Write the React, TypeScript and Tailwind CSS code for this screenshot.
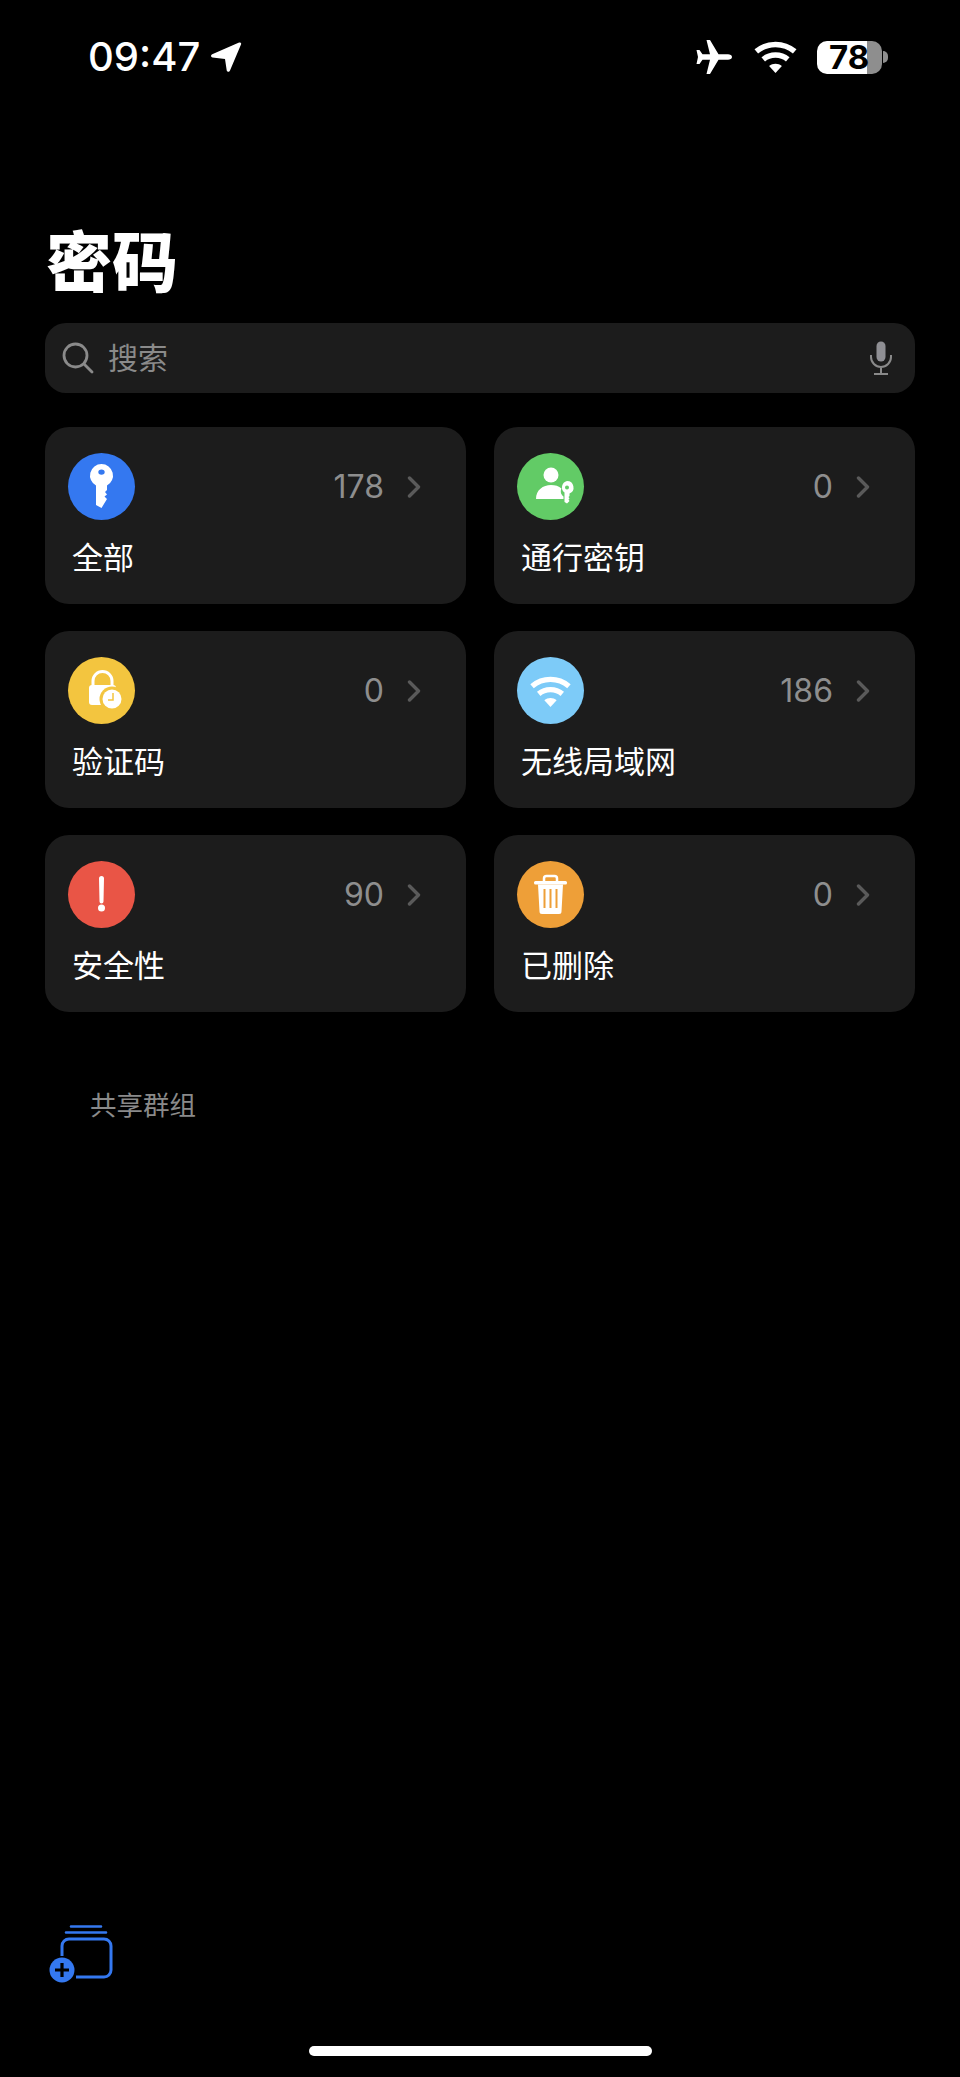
const font = 'font-["Inter","Noto_Sans_CJK_SC",sans-serif]'

function KeyIcon() {
  return (
    <svg viewBox="0 0 67 67" className="w-full h-full">
      <path
        fill="#fff"
        fillRule="evenodd"
        d="M33.5 11a11.500 11.500 0 0 1 5.500 21.600V37l-2 2 2 2.500-2.500 2 2.500 2.500-5.500 9-5.500-3V32.600A11.500 11.500 0 0 1 33.500 11Zm0 5.500a3.200 2.600 0 1 0 0 5.200 3.200 2.600 0 0 0 0-5.200Z"
      />
    </svg>
  )
}

function PasskeyIcon() {
  return (
    <svg viewBox="0 0 67 67" className="w-full h-full">
      <circle cx="34" cy="22" r="7.500" fill="#fff" />
      <path fill="#fff" d="M19 46c0-9 7-14 15-14 4 0 8 1 10.500 3.500-1.500 3-.5 6 2 8V46Z" />
      <path
        fill="#fff"
        fillRule="evenodd"
        d="M50 28a6.500 6.500 0 0 1 2.500 12.500V43l-1 1 1 1.500-1 1 1 1.500-2.500 2.500-2.500-1.500v-9.500A6.500 6.500 0 0 1 50 28Zm0 4.500a2 2 0 1 0 0 4 2 2 0 0 0 0-4Z"
      />
    </svg>
  )
}

function LockClockIcon() {
  return (
    <svg viewBox="0 0 67 67" className="w-full h-full">
      <path fill="none" stroke="#fff" strokeWidth="3" d="M25 29v-5a9.500 9.500 0 0 1 19 0v5" />
      <rect x="21" y="28" width="27" height="20" rx="3" fill="#fff" />
      <circle cx="44" cy="42" r="12.500" fill="#f3c53f" />
      <circle cx="44" cy="42" r="9.500" fill="#fff" />
      <path fill="none" stroke="#f3c53f" strokeWidth="1.500" d="M45 36v7h-5" />
    </svg>
  )
}

function WifiGlyph({ color = '#fff' }: { color?: string }) {
  return (
    <svg viewBox="0 0 40 30" className="w-full h-full">
      <path fill="none" stroke={color} strokeWidth="5.200" d="M2 9.800c10.500-8.800 25.500-8.800 36 0" />
      <path fill="none" stroke={color} strokeWidth="5.200" d="M8.500 17.300c6.500-5.500 16.500-5.500 23 0" />
      <path fill={color} d="M14 23.500c3.500-2.800 8.500-2.800 12 0L20 30Z" />
    </svg>
  )
}

function AlertIcon() {
  return (
    <svg viewBox="0 0 67 67" className="w-full h-full">
      <path fill="#fff" d="M31 17.500a2.500 2.500 0 0 1 5 0l-.5 23a2 2 0 0 1-4 0Z" />
      <circle cx="33.500" cy="47" r="3.500" fill="#fff" />
    </svg>
  )
}

function TrashIcon() {
  return (
    <svg viewBox="0 0 67 67" className="w-full h-full">
      <path fill="none" stroke="#fff" strokeWidth="2.500" d="M27 21v-3.500a2.500 2.500 0 0 1 2.500-2.500h8a2.500 2.500 0 0 1 2.500 2.500V21" />
      <rect x="17" y="20" width="33" height="3.500" rx="1.500" fill="#fff" />
      <path fill="#fff" d="M21 23.500h25l-1.500 27a2.500 2.500 0 0 1-2.500 2.500H25a2.500 2.500 0 0 1-2.500-2.500Z" />
      <path stroke="#ee9f38" strokeWidth="2" d="M27.500 28v19M33.500 28v19M39.500 28v19" />
    </svg>
  )
}

const items = [
  { label: '全部', count: 178, bg: 'bg-[#3478f0]', icon: <KeyIcon /> },
  { label: '通行密钥', count: 0, bg: 'bg-[#62cb66]', icon: <PasskeyIcon /> },
  { label: '验证码', count: 0, bg: 'bg-[#f3c53f]', icon: <LockClockIcon /> },
  {
    label: '无线局域网',
    count: 186,
    bg: 'bg-[#7dcbf8]',
    icon: (
      <div className="w-full h-full px-[13px] pt-[19px] pb-[17px]">
        <WifiGlyph />
      </div>
    ),
  },
  { label: '安全性', count: 90, bg: 'bg-[#e95546]', icon: <AlertIcon /> },
  { label: '已删除', count: 0, bg: 'bg-[#ee9f38]', icon: <TrashIcon /> },
]

export default function App() {
  return (
    <div className={`w-[960px] h-[2077px] bg-black text-white flex flex-col overflow-hidden ${font}`}>
      {/* status bar */}
      <div className="h-[114px] flex items-center justify-between pl-[88px] pr-[72px]">
        <div className="flex items-center gap-[10px]">
          <span className="text-[40px] leading-none font-medium">09:47</span>
          <svg viewBox="0 0 32 32" className="w-[32px] h-[32px]">
            <path fill="#fff" d="M30 1.500c1 0 1.500 1 1 2L20 29.500c-.8 1.800-3 1.500-3.300-.3L15 18 2.500 16.500C.7 16.200.5 14 2.200 13.200L28.500 1.800c.5-.2 1-.3 1.500-.3Z" />
          </svg>
        </div>
        <div className="flex items-center">
          <svg viewBox="0 0 36 36" className="w-[36px] h-[36px]">
            <path fill="#fff" d="M36 18c0 1.800-2 2.800-4 2.800h-9.500L14 35h-3.500l3.500-14.200H6.500L3.500 25H.5l1.500-7-1.500-7h3l3 4.200H14L10.500 1H14l8.500 14.200H32c2 0 4 1 4 2.800Z" />
          </svg>
          <div className="w-[45px] h-[32px] ml-[21px]">
            <WifiGlyph />
          </div>
          <div className="w-[65px] h-[33px] ml-[19px] rounded-[10px] bg-[linear-gradient(90deg,#fff_50px,#8e8e8e_50px)] flex items-center pl-[12px] text-black text-[33px] font-bold leading-none">
            78
          </div>
          <div className="w-[5px] h-[12px] ml-[1px] bg-[#8e8e8e] rounded-r-full" />
        </div>
      </div>

      {/* title */}
      <h1 className='mt-[111px] pl-[46px] text-[66px] leading-[66px] font-black font-["Noto_Sans_CJK_SC",sans-serif]'>密码</h1>

      {/* search */}
      <div className="mt-[32px] mx-[45px] h-[70px] rounded-[21px] bg-[#1c1c1c] flex items-center pl-[17px] pr-[22px]">
        <svg viewBox="0 0 32 32" className="w-[32px] h-[32px]" fill="none" stroke="#8a8a8a" strokeWidth="2.800" strokeLinecap="round">
          <circle cx="13.500" cy="13.500" r="11.500" />
          <path d="M22 22l8 8" />
        </svg>
        <span className="ml-[14px] text-[30px] leading-none text-[#8a8a8a] flex-1">搜索</span>
        <svg viewBox="0 0 24 34" className="w-[24px] h-[34px]" fill="none" stroke="#8a8a8a" strokeWidth="2">
          <rect x="7.500" y="0.500" width="9" height="20" rx="4.500" fill="#8f8f94" stroke="none" />
          <path d="M2 14v2a10 10 0 0 0 20 0v-2M12 26v6M5 33h14" />
        </svg>
      </div>

      {/* cards */}
      <div className="mt-[34px] mx-[45px] grid grid-cols-2 gap-x-[28px] gap-y-[27px]">
        {items.map(item => (
          <div key={item.label} className="h-[177px] rounded-[24px] bg-[#1c1c1c] pt-[26px] pl-[22.500px] pr-[45px]">
            <div className="flex items-center justify-between">
              <div className={`w-[67px] h-[67px] rounded-full ${item.bg}`}>{item.icon}</div>
              <div className="flex items-center gap-[23px]">
                <span className="text-[32px] leading-none font-normal text-[#8e8e8e]">{item.count}</span>
                <svg viewBox="0 0 14 22" className="w-[14px] h-[22px]" fill="none" stroke="#5a5a5a" strokeWidth="3.400" strokeLinecap="round" strokeLinejoin="round">
                  <path d="M2.500 2l9 9-9 9" />
                </svg>
              </div>
            </div>
            <div className="mt-[18px] ml-[4.500px] text-[31px] leading-[40px]">{item.label}</div>
          </div>
        ))}
      </div>

      {/* section label */}
      <div className="mt-[77px] pl-[90px] text-[26.500px] leading-[32px] text-[#8a8a8a]">共享群组</div>

      {/* bottom toolbar */}
      <div className="mt-auto pl-[48px]">
        <svg viewBox="0 0 66 60" className="w-[66px] h-[60px]">
          <path d="M23 2.500h30M18 8.500h40" stroke="#3478f0" strokeWidth="2.600" strokeLinecap="round" fill="none" />
          <path d="M14 32V22a7 7 0 0 1 7-7h35a7 7 0 0 1 7 7v24a7 7 0 0 1-7 7H28" stroke="#3478f0" strokeWidth="3" fill="none" />
          <circle cx="14" cy="46" r="12.500" fill="#3478f0" />
          <path d="M7 46h14M14 39v14" stroke="#000" strokeWidth="3.200" />
        </svg>
      </div>

      {/* home indicator */}
      <div className="mt-[62px] mb-[21px] mx-auto w-[343px] h-[10px] rounded-full bg-white" />
    </div>
  )
}
